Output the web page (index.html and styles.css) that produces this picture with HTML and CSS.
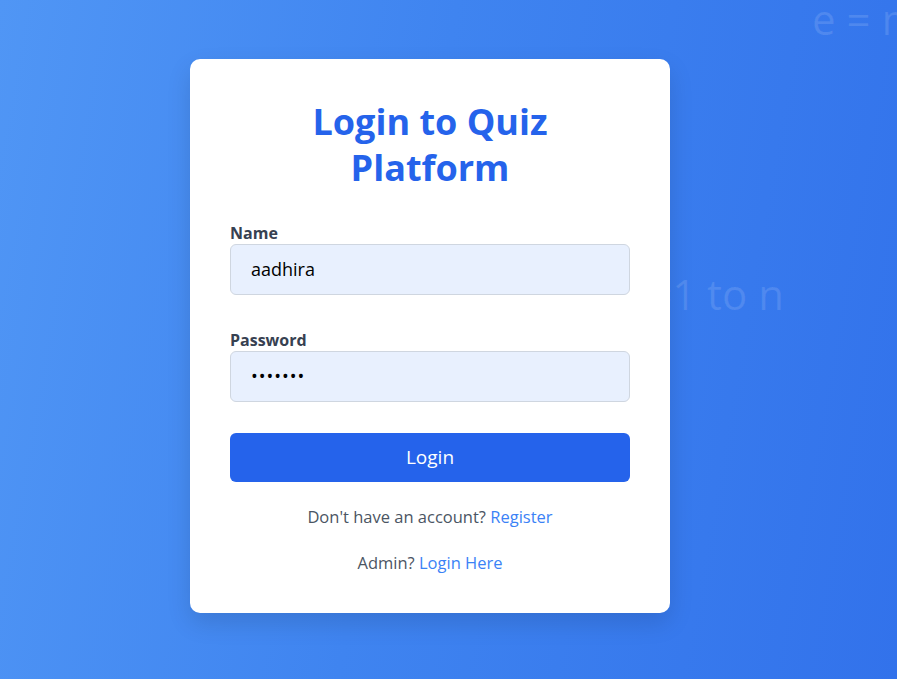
FILE: index.html
```html
<!DOCTYPE html>
<html lang="en">
<head>
<meta charset="utf-8">
<title>Login to Quiz Platform</title>
<link rel="stylesheet" href="styles.css">
</head>
<body>
<div class="bg-formula formula-emc">e = mc²</div>
<div class="bg-formula formula-sum">∑ i=1 to n</div>
<main class="page">
  <section class="card">
    <h2 class="title">Login to Quiz<br>Platform</h2>
    <form class="form">
      <div class="field">
        <label class="label" for="name">Name</label>
        <input class="input" id="name" type="text" value="aadhira">
      </div>
      <div class="field">
        <label class="label" for="password">Password</label>
        <input class="input input-pass" id="password" type="password" value="aadhira">
      </div>
      <button class="btn" type="button">Login</button>
    </form>
    <p class="note note-first">Don't have an account? <a class="link" href="#">Register</a></p>
    <p class="note">Admin? <a class="link" href="#">Login Here</a></p>
  </section>
</main>
</body>
</html>
```

FILE: styles.css
```css
* { box-sizing: border-box; }
html, body { margin: 0; padding: 0; height: 100%; }
body {
  font-family: "Open Sans", "Noto Sans", sans-serif;
  background: linear-gradient(100deg, #5096f5 0%, #3f84f0 45%, #3272eb 100%);
  overflow: hidden;
  position: relative;
}
.bg-formula {
  position: absolute;
  color: rgba(255, 255, 255, 0.12);
  font-family: "Open Sans", "Noto Sans", sans-serif;
  font-size: 42px;
  white-space: nowrap;
}
.formula-emc { left: 812px; top: -10px; }
.formula-sum { right: 113px; top: 265px; }
.page {
  position: relative;
  min-height: 100vh;
  display: flex;
  align-items: center;
  justify-content: center;
  padding: 0 37px 8px 0;
}
.card {
  width: 480px;
  background: #fff;
  border-radius: 10px;
  padding: 40px 40px 38px;
  box-shadow: 0 10px 25px rgba(0, 0, 0, 0.12);
}
.title {
  margin: 0 0 32px;
  text-align: center;
  color: #2563eb;
  font-size: 36px;
  line-height: 46px;
  font-weight: 700;
}
.field { margin-bottom: 35px; }
.field + .field { margin-bottom: 31px; }
.label {
  display: block;
  font-weight: 700;
  font-size: 16px;
  line-height: 20px;
  color: #374151;
  margin-bottom: 1px;
}
.input {
  display: block;
  width: 100%;
  height: 51px;
  padding: 0 20px;
  font-family: inherit;
  font-size: 18px;
  color: #000;
  background: #e8f0fe;
  border: 1px solid #cfd6e0;
  border-radius: 6px;
  outline: none;
}
.input-pass { letter-spacing: 1px; }
.btn {
  display: block;
  width: 100%;
  height: 49px;
  border: none;
  border-radius: 6px;
  background: #2563eb;
  color: #fff;
  font-family: inherit;
  font-size: 19px;
}
.note {
  margin: 22px 0 0;
  text-align: center;
  font-size: 16.5px;
  line-height: 24px;
  color: #4b5563;
}
.note-first { margin-top: 23px; }
.link { color: #3b82f6; text-decoration: none; }
```
